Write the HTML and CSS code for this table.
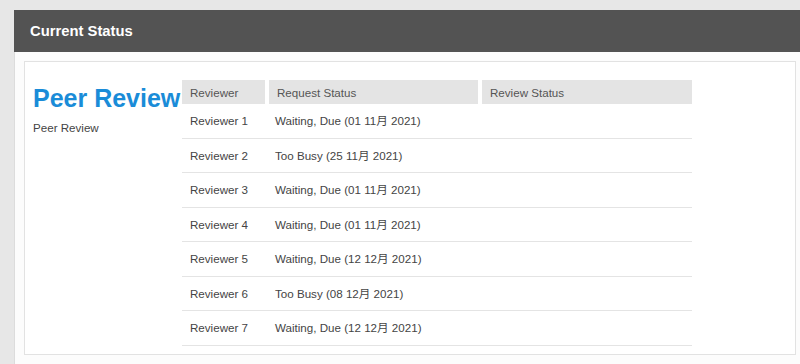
FILE: index.html
```html
<!DOCTYPE html>
<html lang="en">
<head>
    <meta charset="UTF-8">
    <meta name="viewport" content="width=device-width, initial-scale=1.0">
    <title>Current Status</title>
    <link rel="stylesheet" href="styles.css">
</head>
<body>
    <div class="panel">
        <div class="panel-heading">Current Status</div>
        <div class="panel-body">
            <div class="status-box">
                <div class="stage">
                    <h2>Peer Review</h2>
                    <p>Peer Review</p>
                </div>
                <table class="reviewers">
                    <thead>
                        <tr>
                            <th class="col-name">Reviewer</th>
                            <th class="col-request">Request Status</th>
                            <th class="col-review">Review Status</th>
                        </tr>
                    </thead>
                    <tbody>
                        <tr><td>Reviewer 1</td><td>Waiting, Due (01 11月 2021)</td><td></td></tr>
                        <tr><td>Reviewer 2</td><td>Too Busy (25 11月 2021)</td><td></td></tr>
                        <tr><td>Reviewer 3</td><td>Waiting, Due (01 11月 2021)</td><td></td></tr>
                        <tr><td>Reviewer 4</td><td>Waiting, Due (01 11月 2021)</td><td></td></tr>
                        <tr><td>Reviewer 5</td><td>Waiting, Due (12 12月 2021)</td><td></td></tr>
                        <tr><td>Reviewer 6</td><td>Too Busy (08 12月 2021)</td><td></td></tr>
                        <tr><td>Reviewer 7</td><td>Waiting, Due (12 12月 2021)</td><td></td></tr>
                    </tbody>
                </table>
            </div>
        </div>
    </div>
</body>
</html>
```

FILE: styles.css
```css
body {
    margin: 0;
    padding: 10px 0 0 14px;
    background: #e7e7e7;
    font-family: "Liberation Sans", Arial, "Noto Sans CJK SC", sans-serif;
    color: #444;
    overflow: hidden;
}

.panel {
    width: 785px;
    background: #fcfcfc;
    border: 1px solid #dcdcdc;
    border-top: none;
}

.panel-heading {
    height: 42px;
    line-height: 42px;
    padding-left: 16px;
    margin-left: -1px;
    margin-right: -2px;
    background: #535353;
    color: #fff;
    font-weight: bold;
    font-size: 14.8px;
}

.panel-body {
    padding: 9px 4px 9px 9px;
}

.status-box {
    display: flex;
    align-items: flex-start;
    background: #fff;
    border: 1px solid #e2e2e2;
    padding: 18px 8px 8px 8px;
}

.stage {
    width: 149px;
    flex-shrink: 0;
}

.stage h2 {
    margin: 0;
    padding-top: 4px;
    font-size: 25px;
    line-height: 28px;
    color: #1a8cd8;
    white-space: nowrap;
}

.stage p {
    margin: 9px 0 0;
    font-size: 11.6px;
    color: #444;
}

.reviewers {
    width: 510px;
    border-collapse: separate;
    border-spacing: 0;
    font-size: 11.6px;
}

.reviewers th {
    height: 24px;
    padding: 0 8px;
    text-align: left;
    font-weight: normal;
    color: #555;
    background: #e4e4e4;
    background-clip: padding-box;
    border-left: 2px solid #fff;
    border-right: 2px solid #fff;
}

.reviewers th:first-child {
    border-left: none;
}

.reviewers th:last-child {
    border-right: none;
}

.col-name { width: 67px; }
.col-request { width: 193px; }

.reviewers td {
    padding: 10px 8px;
    line-height: 13.5px;
    border-bottom: 1px solid #e4e4e4;
    white-space: nowrap;
}
```
